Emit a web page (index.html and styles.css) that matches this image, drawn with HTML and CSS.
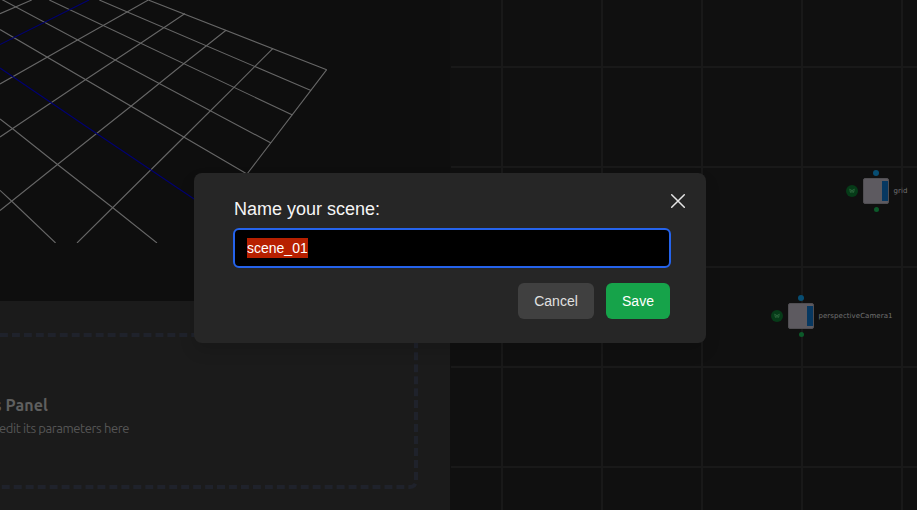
FILE: index.html
```html
<!DOCTYPE html>
<html lang="en">
<head>
<meta charset="utf-8">
<title>Scene editor</title>
<link rel="stylesheet" href="styles.css">
</head>
<body>
<main class="workspace">
  <div class="left">
    <section class="viewport">
      <svg width="450" height="243" viewBox="0 0 450 243" fill="none">
        <g class="wire">
          <path d="M148.3 0L326.7 69.7M99.3 0L311 90.5M49.3 0L292.5 115M0 -1.5L271 143M0 29.5L247 174M0 119L12.3 128.5L57.5 164.5L112.5 207.5L157 243M0 190.3L11.5 201L55.6 243"/>
          <path d="M326.7 69.7L247 174M273 48.3L234 87.3L183 138L77 243M226 30.3L184 63.5L130 107L57.5 164.5L0 210.5M185 13.5L141 43L85 80L0 137M148.3 0L77 40.3L0 84M31.7 0L0 13.7"/>
        </g>
        <path class="axis" d="M89 0L0 44.5M0 68L84 125L203 205"/>
      </svg>
    </section>
    <section class="panel">
      <div class="drop">
        <h2>s Panel</h2>
        <p>edit its parameters here</p>
      </div>
    </section>
  </div>
  <section class="graph">
    <div class="node node-grid">
      <svg class="badge" width="12" height="12" viewBox="0 0 12 12"><circle cx="6" cy="6" r="6"/><path d="M3.3 4.2L6 5.6L8.7 4.2M3.8 5.4L4.6 7.4L6 6.6L7.4 7.4L8.2 5.4"/></svg>
      <div class="body"><i class="flag"></i><i class="port in"></i><i class="port out"></i></div>
      <span class="name">grid</span>
    </div>
    <div class="node node-camera">
      <svg class="badge" width="12" height="12" viewBox="0 0 12 12"><circle cx="6" cy="6" r="6"/><path d="M3.3 4.2L6 5.6L8.7 4.2M3.8 5.4L4.6 7.4L6 6.6L7.4 7.4L8.2 5.4"/></svg>
      <div class="body"><i class="flag"></i><i class="port in"></i><i class="port out"></i></div>
      <span class="name">perspectiveCamera1</span>
    </div>
  </section>
</main>
<div class="modal" role="dialog">
  <label>Name your scene:</label>
  <div class="field"><span class="selected">scene_01</span></div>
  <div class="actions">
    <button class="cancel">Cancel</button>
    <button class="save">Save</button>
  </div>
  <svg class="close" width="16" height="16" viewBox="0 0 16 16"><path d="M1.7 1.7L14.3 14.3M14.3 1.7L1.7 14.3"/></svg>
</div>
</body>
</html>
```
FILE: styles.css
```css
* { box-sizing: border-box; }
body {
  margin: 0;
  height: 510px;
  overflow: hidden;
  background: #0e0e0e;
  font-family: "Liberation Sans", Arial, sans-serif;
}
.workspace { display: grid; grid-template-columns: 450px 1fr; height: 510px; }
.left { display: flex; flex-direction: column; overflow: hidden; }
.viewport { height: 301px; background: #0e0e0e; }
.viewport svg { display: block; }
.wire { stroke: #666; stroke-width: 1.1; }
.axis { stroke: #000072; stroke-width: 1.1; }
.panel { flex: 1; padding: 32px 32px 21px 0; background: #1b1b1b; }
.drop {
  height: 156px;
  margin-left: -20px;
  padding: 56px 0 0 16px;
  border: 4px dashed #1f222b;
  border-radius: 8px;
}
.drop h2, .drop p {
  margin: 0;
  font-family: Ubuntu, "Noto Sans", sans-serif;
  white-space: nowrap;
  display: flex;
  justify-content: flex-end;
}
.drop h2 { width: 48px; font-size: 16px; line-height: 24px; letter-spacing: 0.1px; color: #5f5f5f; }
.drop p { width: 129px; font-size: 13px; line-height: 20px; margin-top: 1px; letter-spacing: -0.4px; color: #565656; }
.graph {
  position: relative;
  border-left: 1px solid #101010;
  background:
    linear-gradient(90deg, transparent 50px, #191919 50px, #191919 52px, transparent 52px) 0 0 / 100px 100px,
    linear-gradient(transparent 66px, #191919 66px, #191919 68px, transparent 68px) 0 0 / 100px 100px,
    #101010;
  background-clip: padding-box;
}
.node { position: absolute; display: flex; align-items: center; height: 26px; }
.node-grid { left: 395px; top: 178px; }
.node-camera { left: 320px; top: 303px; }
.badge { margin-right: 5px; }
.badge circle { fill: #063b18; }
.badge path { fill: none; stroke: #3a7549; stroke-width: 0.8; }
.body {
  position: relative;
  width: 26px;
  height: 26px;
  padding: 2px 0 2px 18px;
  border: 1px solid #504e52;
  border-radius: 2px;
  background: #5d5a60;
}
.flag { display: block; width: 6px; height: 20px; background: #073861; }
.port { position: absolute; border-radius: 50%; }
.port.in { width: 6px; height: 6px; left: 9px; top: -9.5px; background: #074d72; }
.port.out { width: 5px; height: 5px; left: 9.5px; top: 28px; background: #0c5a2a; }
.name { margin-left: 4.5px; font: 7px "DejaVu Sans", sans-serif; letter-spacing: 0.06px; color: #707070; white-space: nowrap; }
.modal {
  position: absolute;
  left: 194px;
  top: 173px;
  width: 512px;
  height: 170px;
  padding: 24px 36px 24px 40px;
  border-radius: 8px;
  background: #262626;
  box-shadow: 0 8px 16px rgba(0, 0, 0, 0.12);
}
.modal label { display: block; font-size: 18px; line-height: 24px; color: #f5f5f5; }
.field {
  display: flex;
  align-items: center;
  height: 40px;
  margin: 7px -1px 0;
  padding: 0 12px;
  border: 2px solid #2563eb;
  border-radius: 6px;
  background: #000;
  font-size: 14px;
}
.selected { line-height: 20px; background: #b72000; color: #fff; }
.actions { display: flex; justify-content: flex-end; gap: 12px; margin-top: 15px; }
.actions button {
  height: 36px;
  padding: 0 16px;
  border: 0;
  border-radius: 6px;
  font: 14px "Liberation Sans", Arial, sans-serif;
}
.cancel { background: #404040; color: #e0e0e0; width: 76px; }
.save { background: #16a34a; color: #fff; width: 64px; }
.close { position: absolute; left: 476px; top: 20px; }
.close path { fill: none; stroke: #e5e5e5; stroke-width: 1.5; stroke-linecap: round; }
```
